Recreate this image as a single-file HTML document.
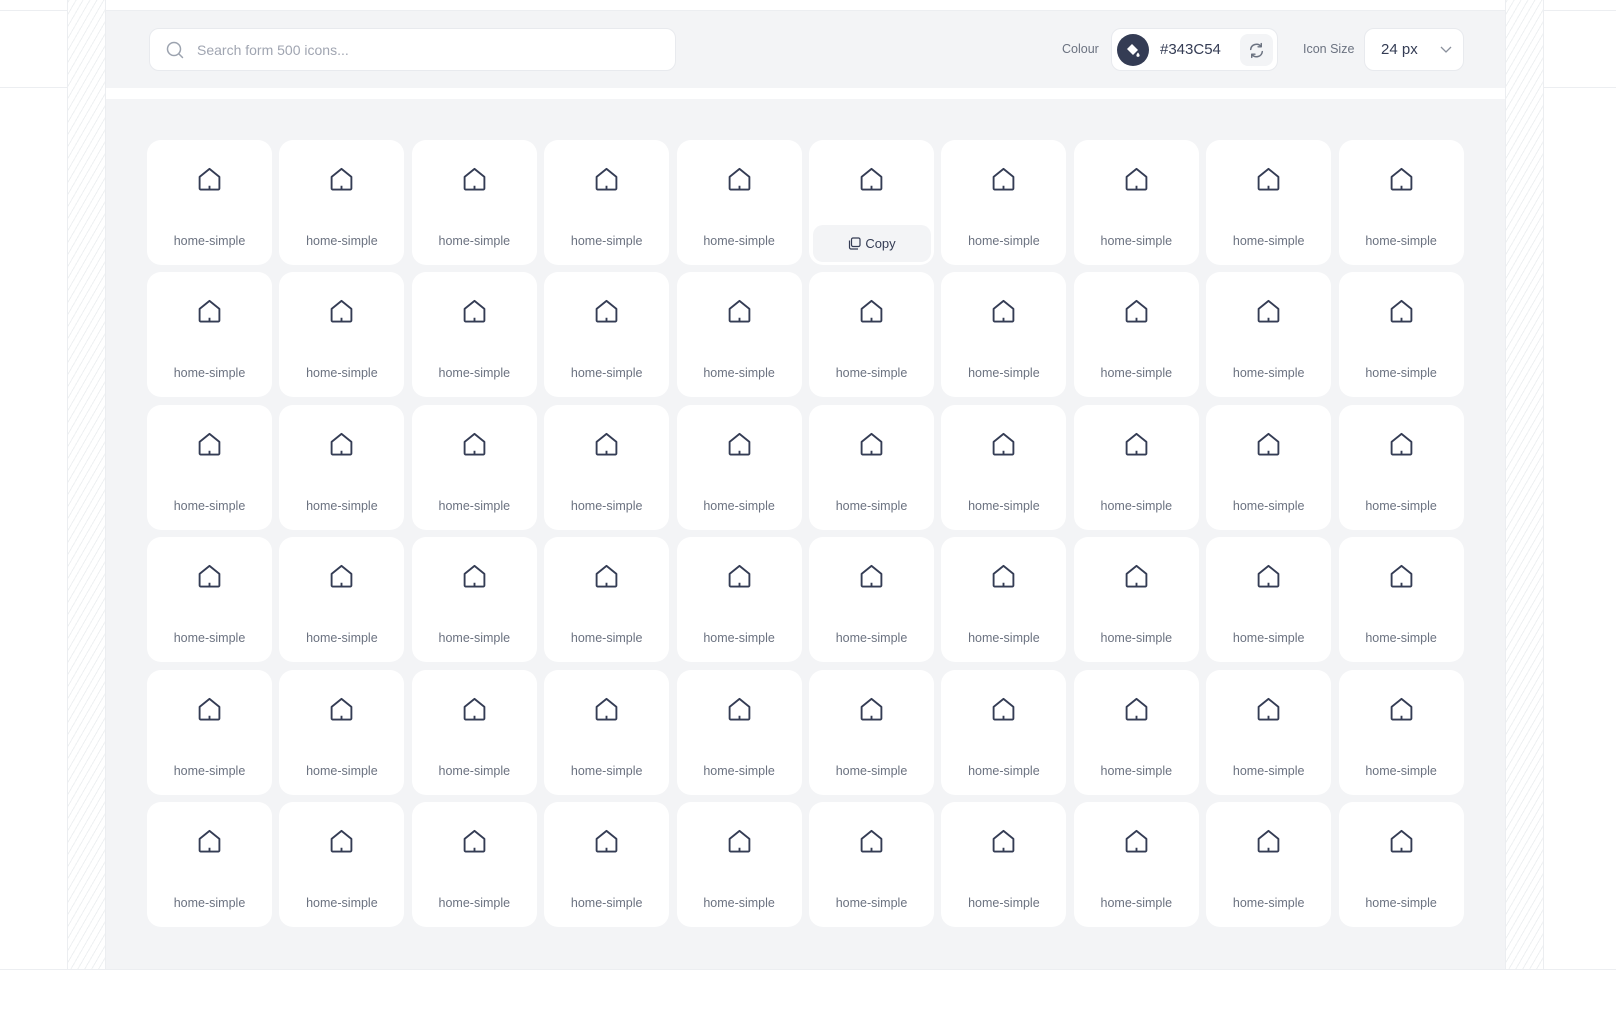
<!DOCTYPE html>
<html><head><meta charset="utf-8"><style>
*{box-sizing:border-box;margin:0;padding:0}
body{width:1616px;height:1026px;background:#fff;font-family:"Liberation Sans",sans-serif;position:relative;overflow:hidden}
.hl{position:absolute;left:0;width:1616px;height:1px;background:#eceef1}
.hatch{position:absolute;top:0;height:969px;width:39px;border-left:1px solid #eceef1;border-right:1px solid #eceef1;background:repeating-linear-gradient(-60deg,#fff 0 5px,#eef0f2 5px 6px)}
.hdr{position:absolute;left:106px;top:11px;width:1399px;height:77px;background:#f3f4f6}
.main{position:absolute;left:106px;top:99px;width:1399px;height:870px;background:#f3f4f6}
.search{position:absolute;left:149px;top:28px;width:527px;height:43px;background:#fff;border:1px solid #e8eaee;border-radius:10px}
.search span{position:absolute;left:47px;top:13px;font-size:14px;color:#a0a5b1}
.lbl{position:absolute;top:42px;font-size:12.5px;color:#6b7280}
.pill{position:absolute;left:1111px;top:28px;width:167px;height:43px;background:#fff;border:1px solid #e8eaee;border-radius:10px}
.circ{position:absolute;left:5px;top:5px;width:32px;height:32px;border-radius:50%;background:#343c54}
.hex{position:absolute;left:48px;top:12px;font-size:15px;color:#343c54}
.ref{position:absolute;left:128px;top:5px;width:33px;height:32px;border-radius:8px;background:#f3f4f6}
.size{position:absolute;left:1364px;top:28px;width:100px;height:43px;background:#fff;border:1px solid #e8eaee;border-radius:10px}
.size span{position:absolute;left:16px;top:12px;font-size:15px;color:#343c54}
.card{position:absolute;width:125px;height:125px;background:#fff;border-radius:14px}
.card>svg{position:absolute;left:50px;top:27px}
.card .t{position:absolute;left:0;right:0;top:94px;text-align:center;font-size:12.5px;color:#6b7280}
.copy{position:absolute;left:4px;top:85px;width:118px;height:37px;background:#f3f4f6;border-radius:10px;font-size:13px;color:#343c54;text-align:center;line-height:37px;white-space:nowrap}
.copy svg{display:inline-block;vertical-align:-2px;margin-right:4px}
</style></head><body>
<div class="hl" style="top:10px"></div>
<div class="hl" style="top:87px"></div>
<div class="hl" style="top:969px"></div>
<div class="hatch" style="left:67px"></div>
<div class="hatch" style="left:1505px"></div>
<div class="hdr"></div>
<div class="main"></div>
<div class="search"><svg style="position:absolute;left:16px;top:12px" width="18" height="18" viewBox="0 0 18 18" fill="none" stroke="#9ca3af" stroke-width="1.5"><circle cx="8" cy="8" r="6.5"/><path d="M13 13l3.5 3.5" stroke-linecap="round"/></svg><span>Search form 500 icons...</span></div>
<div class="lbl" style="left:1062px">Colour</div>
<div class="pill"><div class="circ"><svg style="position:absolute;left:8px;top:8px" width="16" height="16" viewBox="0 0 16 16" fill="#fff"><path d="M2 7l5-5 6 6-5 5z"/><path d="M13 10.5c0 0-1.6 1.9-1.6 2.8a1.6 1.6 0 003.2 0c0-.9-1.6-2.8-1.6-2.8z"/></svg></div><div class="hex">#343C54</div><div class="ref"><svg style="position:absolute;left:7px;top:7px" width="19" height="19" viewBox="0 0 18 18" fill="none" stroke="#6b7280" stroke-width="1.4" stroke-linecap="round" stroke-linejoin="round"><path d="M3.5 8a5.5 5.5 0 0 1 9.8-2.8M14.5 10a5.5 5.5 0 0 1-9.8 2.8"/><path d="M13.5 2.5v3h-3M4.5 15.5v-3h3"/></svg></div></div>
<div class="lbl" style="left:1303px">Icon Size</div>
<div class="size"><span>24 px</span><svg style="position:absolute;left:74px;top:16px" width="14" height="10" viewBox="0 0 14 10" fill="none" stroke="#8a909c" stroke-width="1.3"><path d="M2 2l5 5 5-5"/></svg></div>
<div id="g"></div>
<script>
var h='';var ic='<svg width="25" height="25" viewBox="0 0 24 24" fill="none" stroke="#343c54" stroke-width="1.8" stroke-linejoin="round"><path d="M2.5 9.5L12 1.8l9.5 7.7V20.5a1.2 1.2 0 0 1-1.2 1.2H3.7a1.2 1.2 0 0 1-1.2-1.2z"/><path d="M12 21.7v-3.7"/></svg>';
for(var r=0;r<6;r++)for(var c=0;c<10;c++){var x=147+c*132.4,y=140+r*132.4;
var inner=(r==0&&c==5)?'<div class="copy"><svg width="13" height="13" viewBox="0 0 13 13" fill="none" stroke="#343c54" stroke-width="1.2"><rect x="3.5" y="1" width="8.5" height="8.5" rx="1.5"/><path d="M1.5 3.5v7a1.5 1.5 0 0 0 1.5 1.5h7"/></svg>Copy</div>':'<div class="t">home-simple</div>';
h+='<div class="card" style="left:'+x+'px;top:'+y+'px">'+ic+inner+'</div>';}
document.getElementById('g').innerHTML=h;
</script>
</body></html>
